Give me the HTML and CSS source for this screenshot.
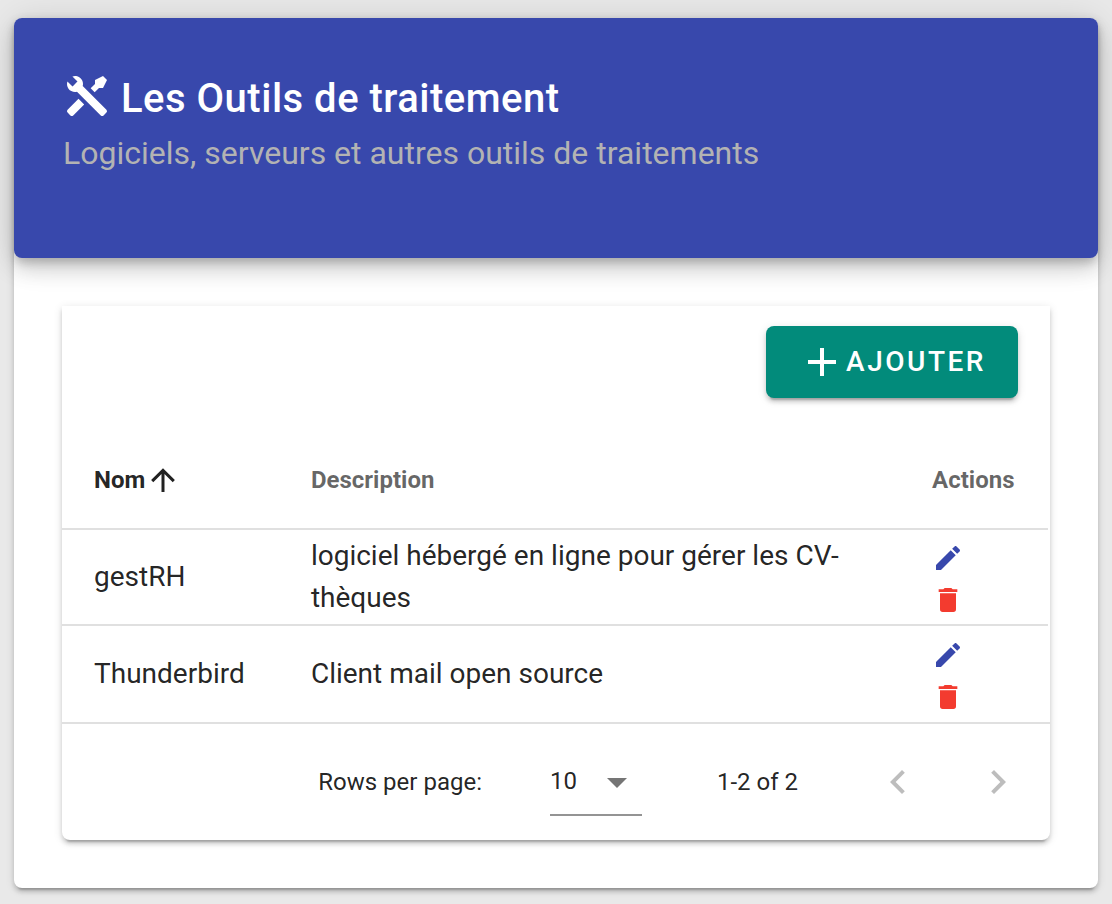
FILE: index.html
```html
<!DOCTYPE html>
<html lang="fr">
<head>
<meta charset="utf-8">
<meta name="viewport" content="width=device-width, initial-scale=1">
<title>Les Outils de traitement</title>
<link rel="stylesheet" href="styles.css">
</head>
<body>
<svg class="sprite" aria-hidden="true">
  <symbol id="pencil" viewBox="0 0 24 24"><path d="M20.71,7.04C21.1,6.65 21.1,6 20.71,5.63L18.37,3.29C18,2.9 17.35,2.9 16.96,3.29L15.12,5.12L18.87,8.87M3,17.25V21H6.75L17.81,9.93L14.06,6.18L3,17.25Z"/></symbol>
  <symbol id="trash" viewBox="0 0 24 24"><path d="M19,4H15.5L14.5,3H9.5L8.5,4H5V6H19M6,19A2,2 0 0,0 8,21H16A2,2 0 0,0 18,19V7H6V19Z"/></symbol>
</svg>
<main class="card">
  <header class="card-header">
    <h1 class="title">
      <svg class="icon" viewBox="0 0 24 24" aria-hidden="true"><path d="M21.71 20.29L20.29 21.71A1 1 0 0 1 18.88 21.71L7 9.85A3.81 3.81 0 0 1 6 10A4 4 0 0 1 2.22 4.7L4.76 7.24L5.29 6.71L6.71 5.29L7.24 4.76L4.7 2.22A4 4 0 0 1 10 6A3.81 3.81 0 0 1 9.85 7L21.71 18.88A1 1 0 0 1 21.71 20.29M2.29 18.88A1 1 0 0 0 2.29 20.29L3.71 21.71A1 1 0 0 0 5.12 21.71L10.59 16.25L7.76 13.42M20 2L16 4V6L13.83 8.17L15.83 10.17L18 8H20L22 4Z"/></svg>
      Les Outils de traitement
    </h1>
    <p class="subtitle">Logiciels, serveurs et autres outils de traitements</p>
  </header>
  <section class="panel">
    <div class="toolbar">
      <button class="add" type="button">
        <svg class="icon" viewBox="0 0 24 24" aria-hidden="true"><path d="M19,13H13V19H11V13H5V11H11V5H13V11H19V13Z"/></svg>Ajouter
      </button>
    </div>
    <div class="table-wrap">
      <table class="table">
        <thead>
          <tr>
            <th class="col-name sorted" scope="col" aria-sort="ascending"><span class="sort">Nom<svg class="icon-sort" viewBox="0 0 24 24" aria-hidden="true"><path d="M13,20H11V8L5.5,13.5L4.08,12.08L12,4.16L19.92,12.08L18.5,13.5L13,8V20Z"/></svg></span></th>
            <th class="col-desc" scope="col">Description</th>
            <th class="col-actions" scope="col">Actions</th>
          </tr>
        </thead>
        <tbody>
          <tr>
            <td>gestRH</td>
            <td>logiciel hébergé en ligne pour gérer les CV-thèques</td>
            <td class="actions">
              <button class="action edit" type="button" aria-label="Modifier gestRH"><svg class="icon-small"><use href="#pencil"/></svg></button>
              <button class="action delete" type="button" aria-label="Supprimer gestRH"><svg class="icon-small"><use href="#trash"/></svg></button>
            </td>
          </tr>
          <tr>
            <td>Thunderbird</td>
            <td>Client mail open source</td>
            <td class="actions">
              <button class="action edit" type="button" aria-label="Modifier Thunderbird"><svg class="icon-small"><use href="#pencil"/></svg></button>
              <button class="action delete" type="button" aria-label="Supprimer Thunderbird"><svg class="icon-small"><use href="#trash"/></svg></button>
            </td>
          </tr>
        </tbody>
      </table>
    </div>
    <footer class="pager">
      <label for="rows">Rows per page:</label>
      <div class="select">
        <select id="rows"><option>10</option><option>25</option><option>50</option></select>
        <svg class="icon caret" viewBox="0 0 24 24" aria-hidden="true"><path d="M7,10L12,15L17,10H7Z"/></svg>
      </div>
      <span class="range">1-2 of 2</span>
      <div class="pages">
        <button class="page" type="button" disabled aria-label="Page précédente"><svg class="icon" viewBox="0 0 24 24"><path d="M15.41,16.58L10.83,12L15.41,7.41L14,6L8,12L14,18L15.41,16.58Z"/></svg></button>
        <button class="page" type="button" disabled aria-label="Page suivante"><svg class="icon" viewBox="0 0 24 24"><path d="M8.59,16.58L13.17,12L8.59,7.41L10,6L16,12L10,18L8.59,16.58Z"/></svg></button>
      </div>
    </footer>
  </section>
</main>
</body>
</html>
```
FILE: styles.css
```css
* { box-sizing: border-box; }

body {
  margin: 0;
  padding: 18px 14px 16px;
  background: #e9e9e9;
  color: rgba(0, 0, 0, .87);
  font-family: Roboto, "Liberation Sans", sans-serif;
  font-size: 28px;
  line-height: 42px;
}

button, select { font: inherit; color: inherit; }
button { border: 0; padding: 0; background: none; }

svg { display: block; flex: none; fill: currentColor; }
.sprite { display: none; }
.icon { width: 48px; height: 48px; }
.icon-sort { width: 36px; height: 36px; }
.icon-small { width: 32px; height: 32px; }

.card {
  padding-bottom: 48px;
  background: #fff;
  border-radius: 8px;
  box-shadow: 0 6px 2px -4px rgba(0, 0, 0, .2), 0 4px 4px rgba(0, 0, 0, .14), 0 2px 10px rgba(0, 0, 0, .12);
}

.card-header {
  padding: 54px 49px 78px;
  background: #3848ac;
  color: #fff;
  border-radius: 8px;
  box-shadow: 0 6px 10px -2px rgba(0, 0, 0, .2), 0 12px 20px rgba(0, 0, 0, .14), 0 2px 36px rgba(0, 0, 0, .12);
}

.title {
  display: flex;
  align-items: flex-start;
  gap: 10px;
  margin: 0;
  font-size: 40px;
  font-weight: 500;
  line-height: 54px;
  letter-spacing: .0125em;
}

.subtitle {
  margin: 0;
  color: #b3b3b3;
  font-size: 32px;
  line-height: 54px;
}

.panel {
  margin: 48px 48px 0;
  background: #fff;
  border-radius: 0 0 8px 8px;
  box-shadow: 0 6px 2px -4px rgba(0, 0, 0, .2), 0 4px 4px rgba(0, 0, 0, .14), 0 2px 10px rgba(0, 0, 0, .12);
}

.toolbar {
  display: flex;
  justify-content: flex-end;
  padding: 20px 32px 34px;
}

.add {
  display: flex;
  align-items: center;
  height: 72px;
  padding: 0 32px;
  background: #028b7b;
  color: #fff;
  border-radius: 8px;
  font-weight: 500;
  letter-spacing: .09em;
  text-transform: uppercase;
  box-shadow: 0 6px 2px -4px rgba(0, 0, 0, .2), 0 4px 4px rgba(0, 0, 0, .14), 0 2px 10px rgba(0, 0, 0, .12);
}

.table-wrap { padding-right: 2px; }

.table {
  width: 100%;
  table-layout: fixed;
  border-collapse: separate;
  border-spacing: 0;
}

.table th {
  height: 98px;
  padding: 0 32px;
  border-bottom: 2px solid #e0e0e0;
  color: rgba(0, 0, 0, .6);
  font-size: 24px;
  font-weight: 700;
  text-align: left;
}

.table .sorted { color: rgba(0, 0, 0, .87); }
.sort { display: flex; align-items: center; }
.col-name { width: 22%; }
.col-desc { width: 63%; }
.col-actions { width: 15%; }

.table td {
  height: 96px;
  padding: 0 32px;
  border-bottom: 2px solid #e0e0e0;
}

.table tbody tr:last-child td { border-bottom: 0; }

.table .actions { padding-top: 4px; }
.action { display: flex; align-items: center; height: 42px; }
.edit { color: #3848ac; }
.delete { color: #f33b2f; }

.pager {
  display: flex;
  align-items: center;
  justify-content: flex-end;
  height: 118px;
  padding-right: 28px;
  border-top: 2px solid #e0e0e0;
  font-size: 24px;
}

.select { position: relative; width: 92px; margin: 0 75px 0 68px; }

.select select {
  display: block;
  width: 100%;
  height: 68px;
  padding: 0;
  border: 0;
  border-bottom: 2px solid #949494;
  border-radius: 0;
  background: none;
  appearance: none;
}

.caret {
  position: absolute;
  top: 10px;
  right: 1px;
  color: #757575;
  pointer-events: none;
}

.pages { display: flex; gap: 52px; margin-left: 76px; }
.page { color: #bdbdbd; }
```
